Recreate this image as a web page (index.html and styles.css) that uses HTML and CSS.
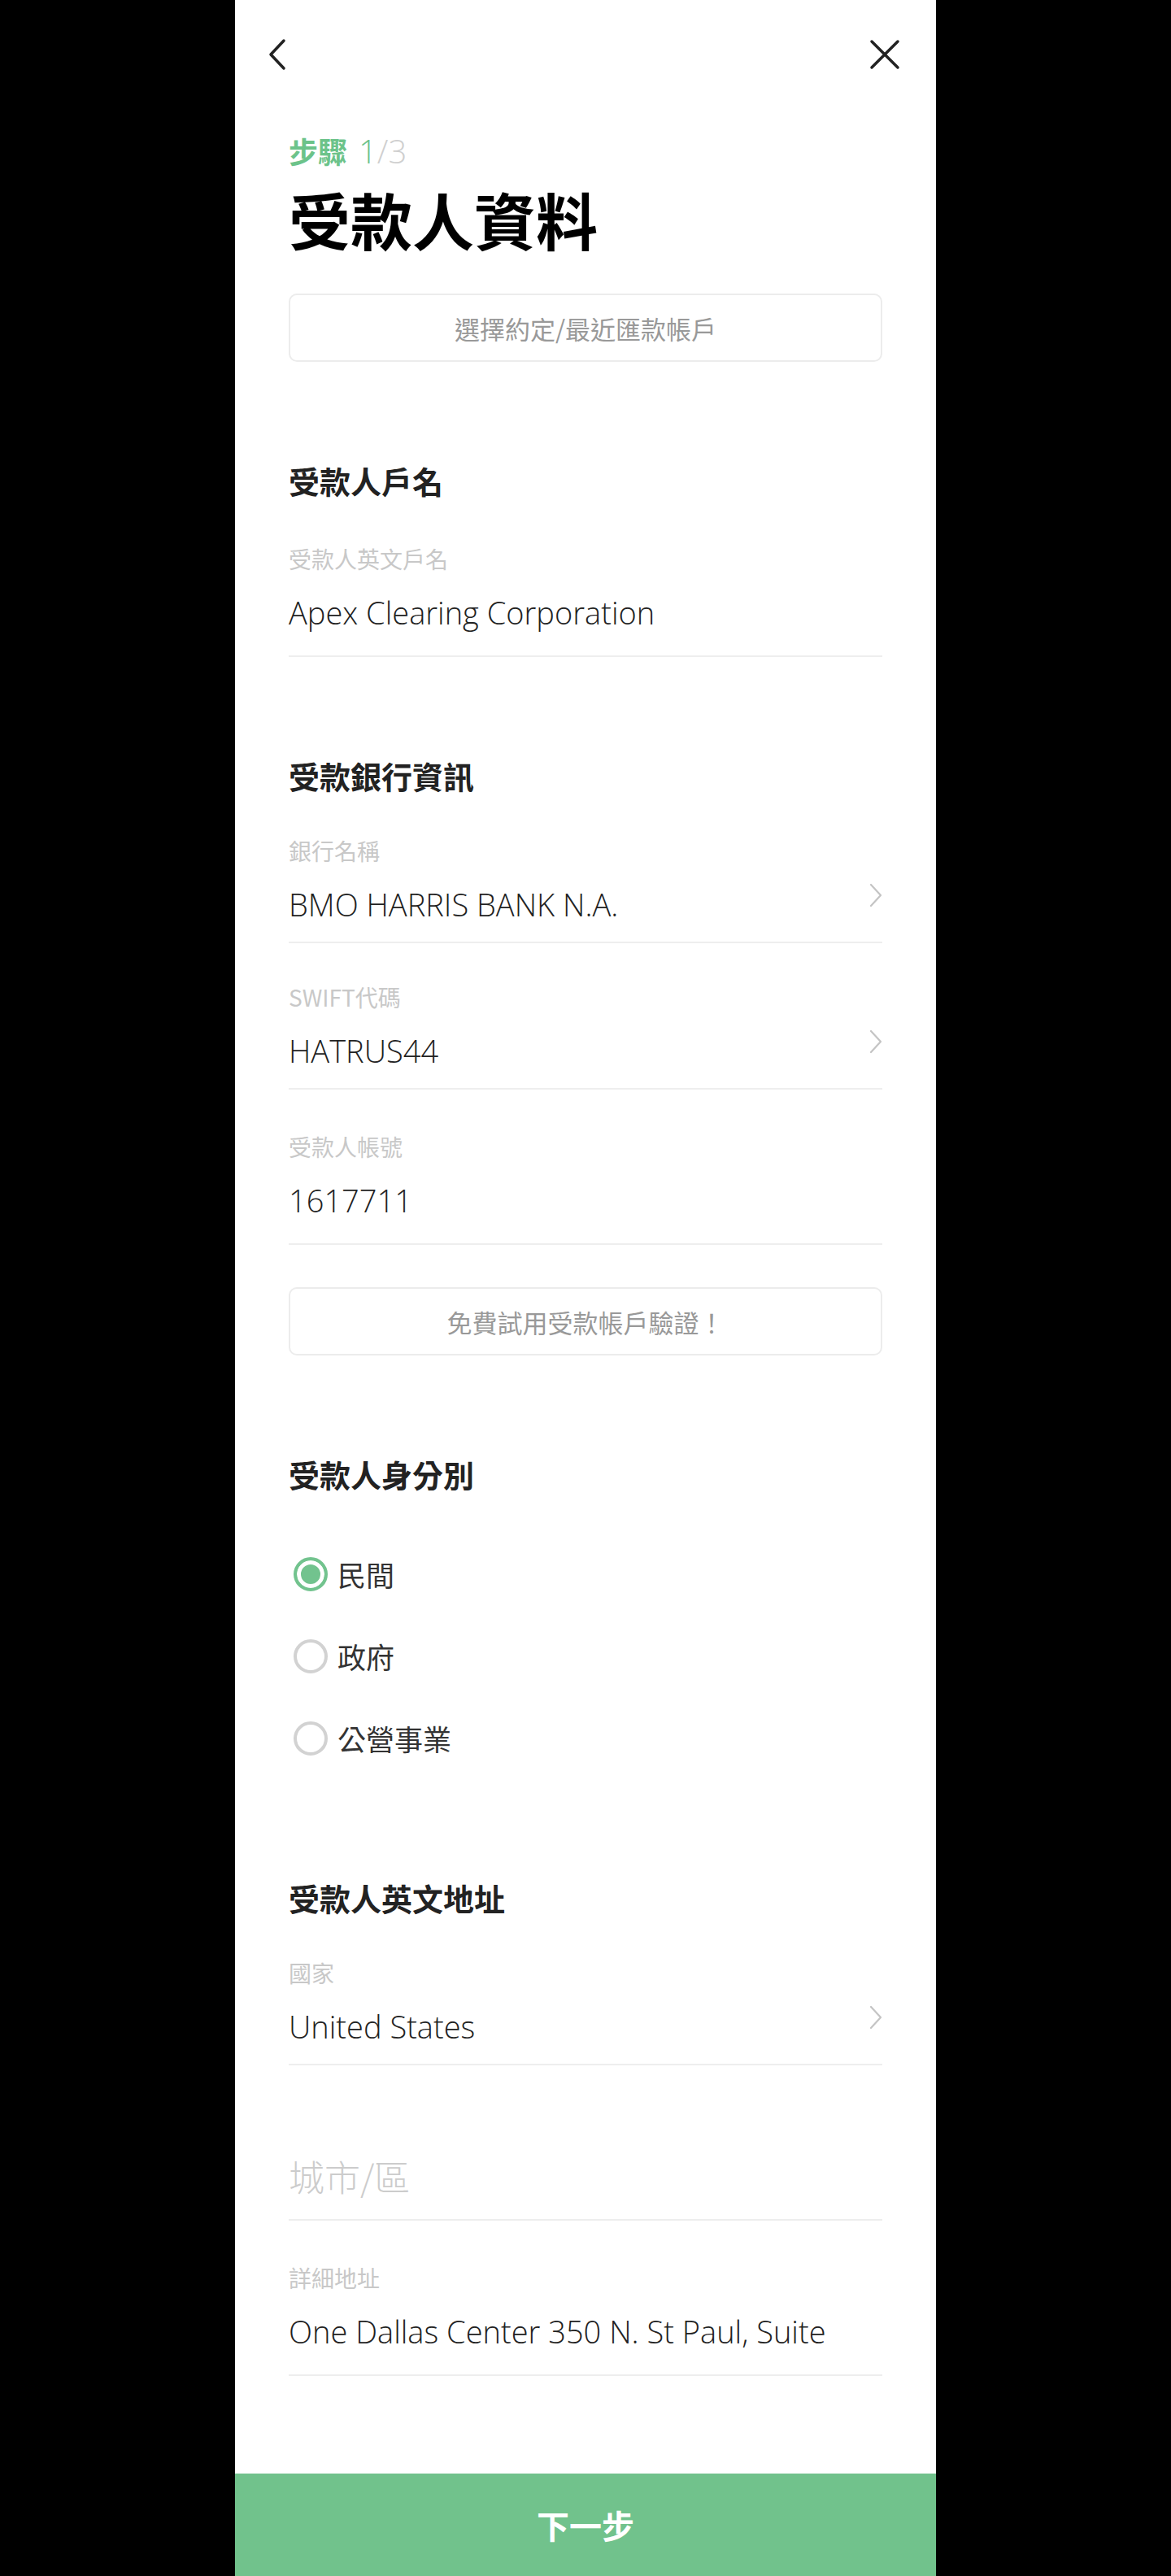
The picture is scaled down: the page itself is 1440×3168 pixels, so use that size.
FILE: index.html
```html
<!DOCTYPE html>
<html lang="zh-Hant">
<head>
    <meta charset="UTF-8">
    <meta name="viewport" content="width=device-width, initial-scale=1.0">
    <title>受款人資料</title>
    <link rel="stylesheet" href="styles.css">
</head>
<body>

<div class="screen">
    <div class="topbar">
        <button class="icon-button" aria-label="返回">
            <svg width="24" height="40" viewBox="0 0 24 40"><path d="M20 3 L4 20 L20 37" stroke="#222" stroke-width="3.5" fill="none" stroke-linecap="round" stroke-linejoin="round"/></svg>
        </button>
        <button class="icon-button" aria-label="關閉">
            <svg width="38" height="38" viewBox="0 0 38 38"><path d="M3 3 L35 35 M35 3 L3 35" stroke="#222" stroke-width="3.5" fill="none" stroke-linecap="round"/></svg>
        </button>
    </div>

    <div class="content">
        <div class="step"><span class="step-word">步驟</span><span class="step-now">1</span><span class="step-total">/3</span></div>
        <h1 class="page-title">受款人資料</h1>
        <button class="outline-button">選擇約定/最近匯款帳戶</button>

        <h2 class="section-title">受款人戶名</h2>
        <div class="field">
            <div class="field-label">受款人英文戶名</div>
            <div class="field-value">Apex Clearing Corporation</div>
        </div>

        <h2 class="section-title">受款銀行資訊</h2>
        <div class="field select">
            <div class="field-label">銀行名稱</div>
            <div class="field-value">BMO HARRIS BANK N.A.<span class="chevron"><svg width="16" height="30" viewBox="0 0 16 30"><path d="M2 2 L14 15 L2 28" stroke="#c4c4c4" stroke-width="2.2" fill="none" stroke-linecap="round" stroke-linejoin="round"/></svg></span></div>
        </div>
        <div class="field select">
            <div class="field-label">SWIFT代碼</div>
            <div class="field-value">HATRUS44<span class="chevron"><svg width="16" height="30" viewBox="0 0 16 30"><path d="M2 2 L14 15 L2 28" stroke="#c4c4c4" stroke-width="2.2" fill="none" stroke-linecap="round" stroke-linejoin="round"/></svg></span></div>
        </div>
        <div class="field">
            <div class="field-label">受款人帳號</div>
            <div class="field-value">1617711</div>
        </div>
        <button class="outline-button verify-button">免費試用受款帳戶驗證！</button>

        <h2 class="section-title">受款人身分別</h2>
        <div class="radio-group">
            <label class="radio-row"><span class="radio checked"></span>民間</label>
            <label class="radio-row"><span class="radio"></span>政府</label>
            <label class="radio-row"><span class="radio"></span>公營事業</label>
        </div>

        <h2 class="section-title">受款人英文地址</h2>
        <div class="field select">
            <div class="field-label">國家</div>
            <div class="field-value">United States<span class="chevron"><svg width="16" height="30" viewBox="0 0 16 30"><path d="M2 2 L14 15 L2 28" stroke="#c4c4c4" stroke-width="2.2" fill="none" stroke-linecap="round" stroke-linejoin="round"/></svg></span></div>
        </div>
        <div class="field">
            <div class="field-label">&nbsp;</div>
            <div class="field-value placeholder">城市/區</div>
        </div>
        <div class="field">
            <div class="field-label">詳細地址</div>
            <div class="field-value">One Dallas Center 350 N. St Paul, Suite</div>
        </div>
    </div>

    <button class="next-button">下一步</button>
</div>

</body>
</html>
```

FILE: styles.css
```css
body {
    margin: 0;
    padding: 0;
    background-color: #000000;
    font-family: "Noto Sans CJK TC", "Noto Sans", sans-serif;
    color: #222222;
}
.screen {
    width: 862px;
    min-height: 100vh;
    margin: 0 auto;
    background-color: #ffffff;
    display: flex;
    flex-direction: column;
}
.topbar {
    height: 134px;
    display: flex;
    align-items: center;
    justify-content: space-between;
    padding: 0 44px 0 40px;
}
.icon-button {
    background: none;
    border: none;
    padding: 0;
    display: flex;
    cursor: pointer;
}
.content {
    flex: 1;
    padding: 0 66px 60px;
}
.step {
    margin-top: 26px;
    font-size: 36px;
    line-height: 50px;
}
.step-word {
    color: #6cc38a;
    font-weight: 700;
}
.step-now,
.step-total {
    font-family: "Open Sans", "Lato", sans-serif;
    font-weight: 300;
    font-size: 40px;
}
.step-now {
    margin-left: 14px;
    color: #6cc38a;
}
.step-total {
    color: #cfcfcf;
}
.page-title {
    margin: 8px 0 0;
    font-size: 76px;
    line-height: 100px;
    font-weight: 700;
    color: #000000;
}
.outline-button {
    display: block;
    width: 100%;
    height: 84px;
    margin-top: 42px;
    background: #ffffff;
    border: 2px solid #ececec;
    border-radius: 10px;
    font-family: inherit;
    font-size: 31px;
    color: #999999;
    cursor: pointer;
}
.verify-button {
    height: 84px;
    margin-top: 52px;
}
.section-title {
    margin: 120px 0 0;
    font-size: 38px;
    line-height: 52px;
    font-weight: 700;
    color: #222222;
}
.field {
    padding: 50px 0 25px;
    border-bottom: 2px solid #eeeeee;
}
.field.select {
    padding: 46px 0 18px;
}
.field-label {
    font-size: 28px;
    line-height: 40px;
    color: #c8c8c8;
}
.field-value {
    margin-top: 18px;
    display: flex;
    align-items: center;
    justify-content: space-between;
    font-family: "Open Sans", "Lato", sans-serif;
    font-weight: 300;
    font-size: 38px;
    line-height: 56px;
    color: #222222;
}
.field-value.placeholder {
    font-family: "Noto Sans CJK TC", sans-serif;
    font-size: 44px;
    color: #cccccc;
}
.chevron {
    display: flex;
    margin-bottom: 22px;
}
.radio-group {
    margin-top: 46px;
}
.radio-row {
    height: 101px;
    display: flex;
    align-items: center;
    gap: 12px;
    font-size: 35px;
    color: #333333;
}
.radio {
    width: 34px;
    height: 34px;
    margin-left: 6px;
    border: 4px solid #d2d2d2;
    border-radius: 50%;
    box-sizing: content-box;
}
.radio.checked {
    border-color: #72c38e;
    background-color: #72c38e;
    box-shadow: inset 0 0 0 5px #ffffff;
}
.next-button {
    height: 126px;
    width: 100%;
    border: none;
    background-color: #71c28c;
    color: #ffffff;
    font-family: inherit;
    font-size: 40px;
    font-weight: 700;
    cursor: pointer;
}
```
